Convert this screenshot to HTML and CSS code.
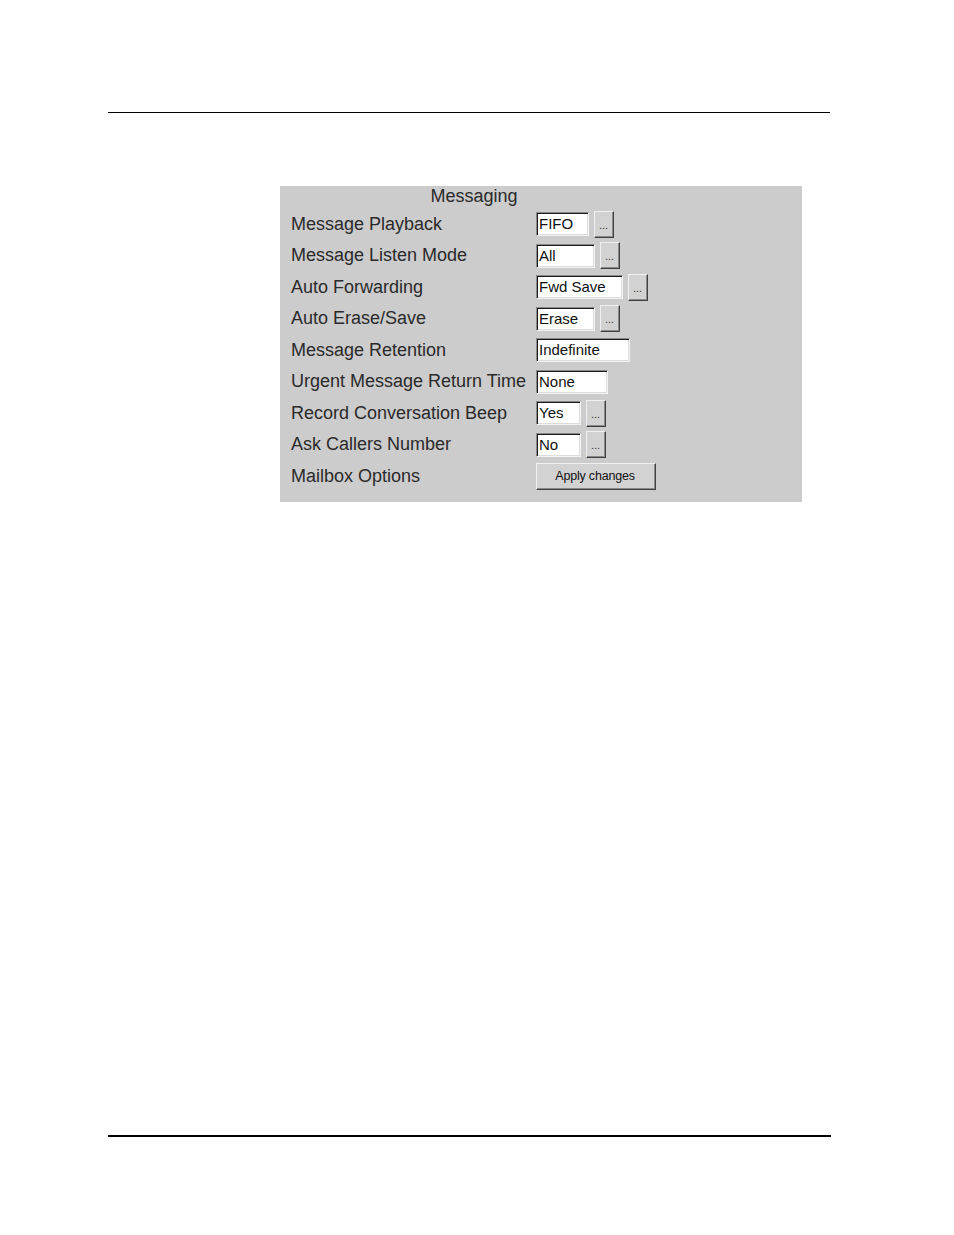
FILE: index.html
```html
<!DOCTYPE html>
<html>
<head>
<meta charset="utf-8">
<link rel="stylesheet" href="styles.css">
</head>
<body>
<div class="page">
  <div class="rule-top"></div>
  <div class="panel">
    <div class="form">
      <div class="title">Messaging</div>
      <div class="row"><div class="label">Message Playback</div><div class="ctrl"><div class="field w53">FIFO</div><div class="dots">...</div></div></div>
      <div class="row"><div class="label">Message Listen Mode</div><div class="ctrl"><div class="field w59">All</div><div class="dots">...</div></div></div>
      <div class="row"><div class="label">Auto Forwarding</div><div class="ctrl"><div class="field w87">Fwd Save</div><div class="dots">...</div></div></div>
      <div class="row"><div class="label">Auto Erase/Save</div><div class="ctrl"><div class="field w59">Erase</div><div class="dots">...</div></div></div>
      <div class="row"><div class="label">Message Retention</div><div class="ctrl"><div class="field w94">Indefinite</div></div></div>
      <div class="row"><div class="label">Urgent Message Return Time</div><div class="ctrl"><div class="field w72">None</div></div></div>
      <div class="row"><div class="label">Record Conversation Beep</div><div class="ctrl"><div class="field w45">Yes</div><div class="dots">...</div></div></div>
      <div class="row"><div class="label">Ask Callers Number</div><div class="ctrl"><div class="field w45">No</div><div class="dots">...</div></div></div>
      <div class="row"><div class="label">Mailbox Options</div><div class="ctrl"><div class="apply">Apply changes</div></div></div>
    </div>
  </div>
  <div class="rule-bottom"></div>
</div>
</body>
</html>
```

FILE: styles.css
```css
html, body {
  margin: 0;
  padding: 0;
  background: #ffffff;
}

.page {
  width: 954px;
  height: 1235px;
  position: relative;
  font-family: "Liberation Sans", Arial, sans-serif;
  overflow: hidden;
}

.rule-top {
  margin: 112px 0 0 108px;
  width: 722px;
  height: 1px;
  background: #000;
}

.panel {
  margin: 73px 0 0 280px;
  width: 522px;
  height: 316px;
  box-sizing: border-box;
  background: #cccccc;
  padding: 0 0 0 9px;
}

.form {
  width: 370px;
  display: flex;
  flex-direction: column;
}

.title {
  text-align: center;
  font-size: 18px;
  line-height: 20px;
  color: #2a2a2a;
  margin-bottom: 2.25px;
}

.row {
  height: 31.5px;
  display: flex;
  align-items: center;
}

.label {
  width: 247px;
  padding-left: 2px;
  box-sizing: border-box;
  font-size: 18px;
  color: #2a2a2a;
  white-space: nowrap;
}

.ctrl {
  display: flex;
  align-items: center;
  gap: 5px;
}

.field {
  height: 24px;
  box-sizing: border-box;
  background: #fff;
  border-top: 1px solid #8a8a8a;
  border-left: 1px solid #8a8a8a;
  border-right: 1px solid #f4f4f4;
  border-bottom: 1px solid #f4f4f4;
  box-shadow: inset 1px 1px 0 #1a1a1a, inset -1px -1px 0 #dcdcdc;
  font-size: 15px;
  line-height: 22px;
  padding-left: 2px;
  color: #111;
  white-space: nowrap;
}

.w45 { width: 45px; }
.w53 { width: 53px; }
.w59 { width: 59px; }
.w72 { width: 72px; }
.w87 { width: 87px; }
.w94 { width: 94px; }

.dots {
  width: 20px;
  height: 27px;
  box-sizing: border-box;
  background: #d2d2d2;
  border-top: 1px solid #f0f0f0;
  border-left: 1px solid #f0f0f0;
  border-right: 1px solid #404040;
  border-bottom: 1px solid #404040;
  box-shadow: inset -1px -1px 0 #8a8a8a;
  font-size: 11px;
  line-height: 10px;
  color: #333;
  display: flex;
  justify-content: center;
  align-items: flex-end;
  padding-bottom: 7px;
  padding-right: 1px;
}

.apply {
  width: 120px;
  height: 27px;
  box-sizing: border-box;
  background: #d2d2d2;
  border-top: 1px solid #f0f0f0;
  border-left: 1px solid #f0f0f0;
  border-right: 1px solid #404040;
  border-bottom: 1px solid #404040;
  box-shadow: inset -1px -1px 0 #8a8a8a;
  font-size: 12.5px;
  letter-spacing: -0.2px;
  color: #111;
  display: flex;
  align-items: center;
  justify-content: center;
  padding-right: 2px;
}

.rule-bottom {
  position: absolute;
  left: 108px;
  top: 1135px;
  width: 723px;
  height: 2px;
  background: #000;
}
```
